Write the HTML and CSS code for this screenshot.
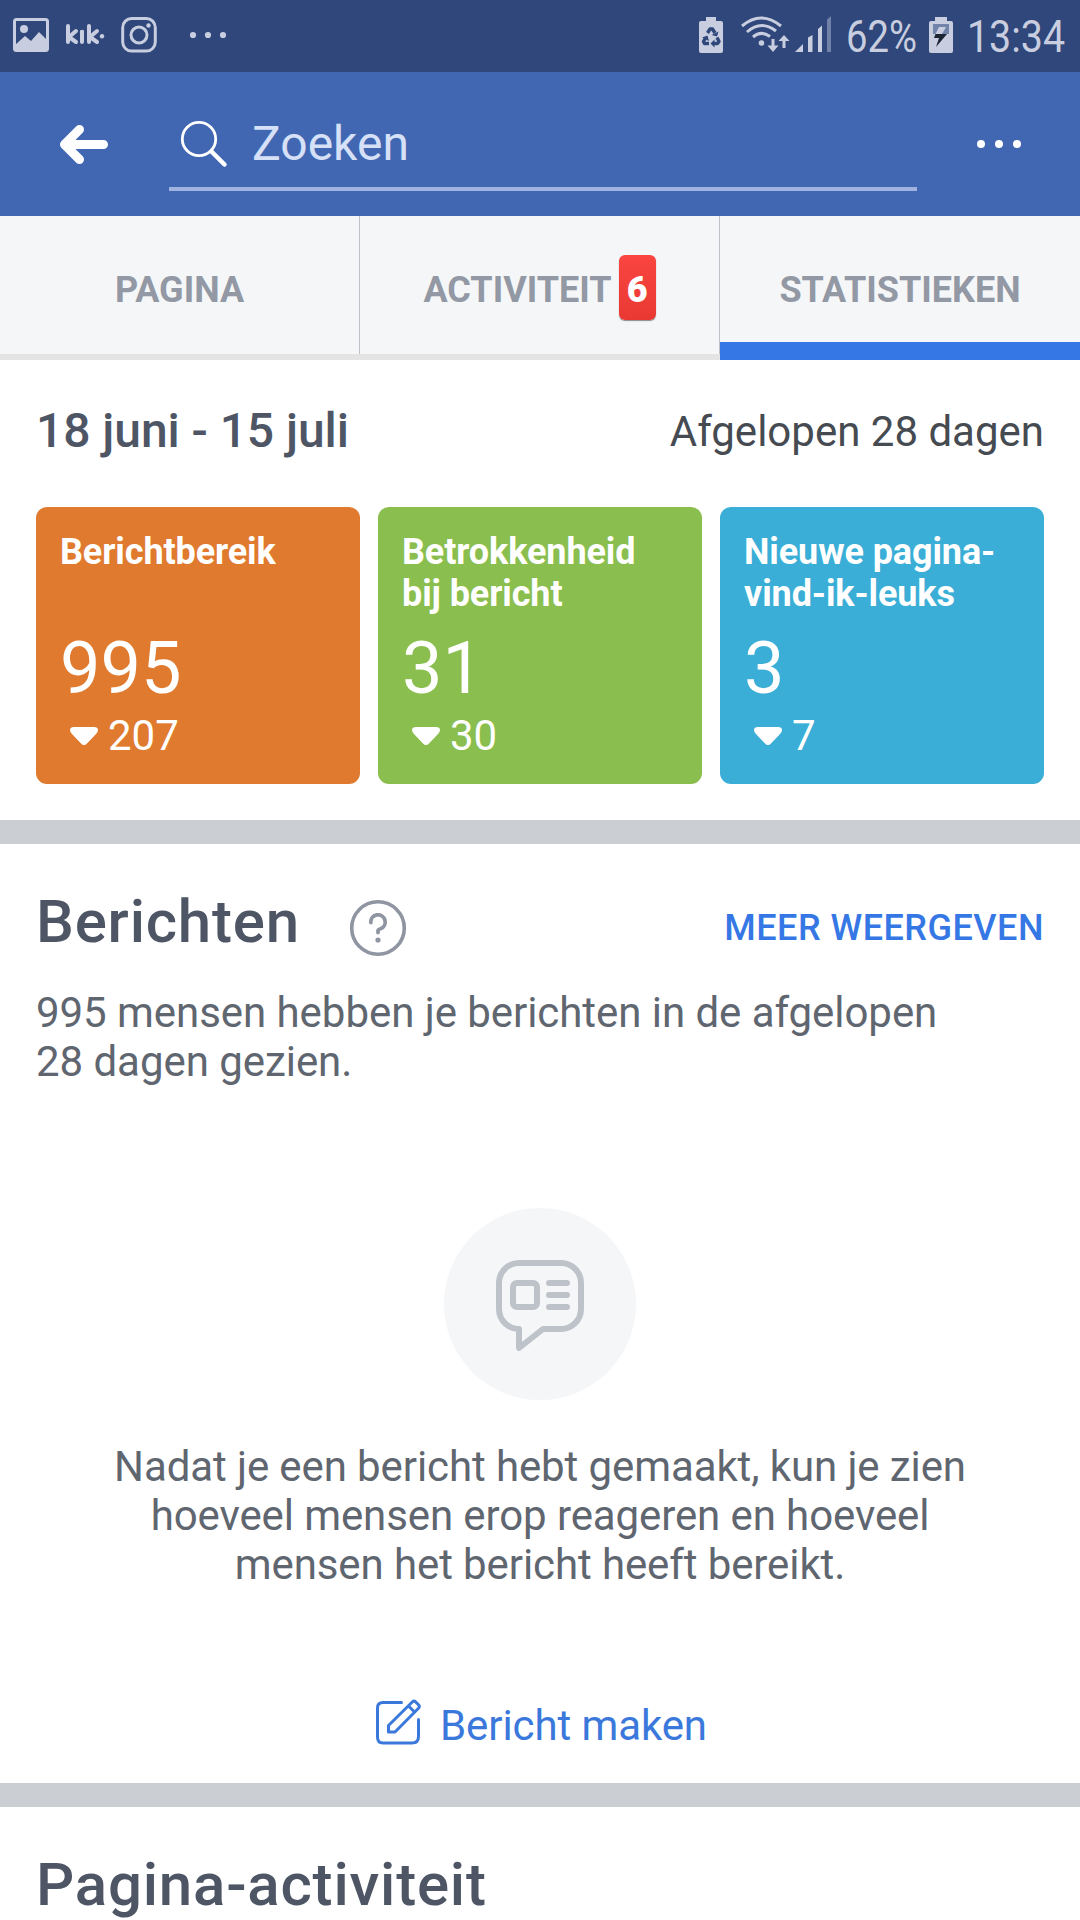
FILE: index.html
```html
<!DOCTYPE html>
<html lang="nl">
<head>
<meta charset="utf-8">
<title>Statistieken</title>
<link rel="stylesheet" href="styles.css">
</head>
<body>
<div class="status">
  <svg class="status-icons" width="240" height="72" viewBox="0 0 240 72" aria-hidden="true">
    <rect x="14.5" y="19.5" width="33" height="31" rx="2" fill="none" stroke="#c8cedf" stroke-width="3"/>
    <circle cx="24" cy="29" r="4" fill="#c8cedf"/>
    <path d="M15 45L25 36L31 41L39 32L47 40V50H15Z" fill="#c8cedf"/>
    <g fill="none" stroke="#c8cedf" stroke-width="4" stroke-linecap="round" stroke-linejoin="round">
      <path d="M68 26V42M76 31L69 37L76 42M82 32V42M89 26V42M97 31L90 37L97 42"/>
    </g>
    <circle cx="82" cy="32" r="2.2" fill="#c8cedf"/>
    <circle cx="102" cy="36.300" r="2.200" fill="#c8cedf"/>
    <rect x="122.700" y="18.500" width="32.600" height="32.600" rx="9" fill="none" stroke="#c8cedf" stroke-width="3"/>
    <circle cx="139" cy="35" r="8" fill="none" stroke="#c8cedf" stroke-width="3"/>
    <circle cx="148.500" cy="25.500" r="2.200" fill="#c8cedf"/>
    <g fill="#c8cedf"><circle cx="193" cy="35" r="3.100"/><circle cx="208" cy="35" r="3.100"/><circle cx="223" cy="35" r="3.100"/></g>
  </svg>
  <div class="status-right">
    <svg width="140" height="72" viewBox="695 0 140 72" aria-hidden="true">
      <path d="M706 17h10v4h5a2 2 0 0 1 2 2v28a2 2 0 0 1-2 2h-20a2 2 0 0 1-2-2V23a2 2 0 0 1 2-2h5z" fill="#c8cedf"/>
      <path d="M707.500 33L710 29H712.500L715 33M717 37.500L719 41.500L717.500 43.500H714M709 43.500H704.500L703.500 41.500L705.500 38" fill="none" stroke="#2f477a" stroke-width="3.400" stroke-linejoin="round"/>
      <path d="M714.500 39.500V47.500L710.500 43.500ZM718.500 31.500L717 36.500L711.500 35ZM702 37.500L707.500 35.500L709 41Z" fill="#2f477a"/>
      <g fill="none" stroke="#c8cedf" stroke-width="3">
        <path d="M742 26Q761 10 781 26M747 32Q761 19.500 776 31M753 37Q761 30 770 36.500"/>
        <path d="M773 39V49M784 37V48"/>
      </g>
      <circle cx="761.500" cy="43" r="2.800" fill="#c8cedf"/>
      <path d="M767.500 45.500L773 52L778.500 45.500ZM778.500 41L784 35L789.500 41Z" fill="#c8cedf"/>
      <path d="M795 52L803 44V52ZM808 37.500L812.500 35V52H808ZM818 29L822 25.500V52H818Z" fill="#c8cedf"/>
      <path d="M827 19.500L831 16V52H827Z" fill="#7281a8"/>
    </svg>
    <svg width="75" height="72" viewBox="0 0 75 72"><text class="status-text" x="2" y="52" textLength="71" lengthAdjust="spacingAndGlyphs">62%</text></svg>
    <svg width="28" height="72" viewBox="927 0 28 72" aria-hidden="true">
      <path d="M935 17h12v4h4a2 2 0 0 1 2 2v28a2 2 0 0 1-2 2h-20a2 2 0 0 1-2-2V23a2 2 0 0 1 2-2h4z" fill="#c8cedf"/>
      <path d="M933 24h16v10h-16z" fill="#7384aa"/>
      <path d="M939 27H946L942 34H935.500Z" fill="#c8cedf"/>
      <path d="M935.500 34H947L936 47L939 38H934Z" fill="#1c2534"/>
    </svg>
    <svg class="clock" width="102" height="72" viewBox="0 0 102 72"><text class="status-text" x="4" y="52" textLength="98" lengthAdjust="spacingAndGlyphs">13:34</text></svg>
  </div>
</div>

<header class="topbar">
  <svg class="back" width="50" height="42" viewBox="0 0 50 42" fill="none" stroke="#fff" stroke-width="9" stroke-linecap="round" stroke-linejoin="round"><path d="M20.500 6.500L5.500 21.500L20.500 36.500M8 21.500H44.500" /></svg>
  <div class="search">
    <svg width="48" height="48" viewBox="0 0 48 48" fill="none" stroke="#fff" stroke-linecap="round"><circle cx="18" cy="19" r="16.700" stroke-width="2.800"/><path d="M30.500 31.500L43.500 44.500" stroke-width="4.500"/></svg>
    <span>Zoeken</span>
  </div>
  <div class="dots"><i></i><i></i><i></i></div>
</header>

<nav class="tabs">
  <div class="tab"><span>PAGINA</span></div>
  <div class="tab"><span>ACTIVITEIT</span><b class="badge">6</b></div>
  <div class="tab active"><span>STATISTIEKEN</span></div>
</nav>

<section class="overview">
  <div class="period"><h3>18 juni - 15 juli</h3><span>Afgelopen 28 dagen</span></div>
  <div class="cards">
    <article class="card orange"><h4>Berichtbereik</h4><div class="value">995</div><div class="change"><svg width="28" height="18" viewBox="0 0 28 18"><path d="M4 0H24Q28 0 28 3Q28 5 26 7L17 16.500Q14 19.500 11 16.500L2 7Q0 5 0 3Q0 0 4 0Z" fill="#fff"/></svg>207</div></article>
    <article class="card green"><h4>Betrokkenheid<br>bij bericht</h4><div class="value">31</div><div class="change"><svg width="28" height="18" viewBox="0 0 28 18"><path d="M4 0H24Q28 0 28 3Q28 5 26 7L17 16.500Q14 19.500 11 16.500L2 7Q0 5 0 3Q0 0 4 0Z" fill="#fff"/></svg>30</div></article>
    <article class="card blue"><h4>Nieuwe pagina-<br>vind-ik-leuks</h4><div class="value">3</div><div class="change"><svg width="28" height="18" viewBox="0 0 28 18"><path d="M4 0H24Q28 0 28 3Q28 5 26 7L17 16.500Q14 19.500 11 16.500L2 7Q0 5 0 3Q0 0 4 0Z" fill="#fff"/></svg>7</div></article>
  </div>
</section>

<section class="posts">
  <div class="posts-head">
    <h2>Berichten</h2>
    <svg class="help" width="58" height="58" viewBox="0 0 58 58" fill="none" stroke="#8f95a1" stroke-linecap="round" stroke-linejoin="round"><circle cx="29" cy="29" r="26.300" stroke-width="3.600"/><path d="M21.800 23.500A7.200 7.200 0 1 1 31.500 29.800Q29 30.600 29 32V33.500" stroke-width="3.800"/><circle cx="29" cy="41" r="2.600" fill="#8f95a1" stroke="none"/></svg>
    <a class="more">MEER WEERGEVEN</a>
  </div>
  <p class="summary">995 mensen hebben je berichten in de afgelopen<br>28 dagen gezien.</p>
  <div class="empty">
    <div class="bubble"><svg width="192" height="192" viewBox="0 0 192 192" fill="none" stroke="#bec3ca" stroke-width="6" stroke-linecap="round" stroke-linejoin="round"><path d="M75 121C64 121 55 112 55 101V75C55 64 64 55 75 55H117C128 55 137 64 137 75V101C137 112 128 121 117 121H99L75 140V121Z"/><rect x="69" y="75" width="24" height="24" rx="4"/><path d="M105 75H123M105 87H123M105 99H123"/></svg></div>
    <p>Nadat je een bericht hebt gemaakt, kun je zien<br>hoeveel mensen erop reageren en hoeveel<br>mensen het bericht heeft bereikt.</p>
  </div>
  <a class="create"><svg width="48" height="48" viewBox="0 0 48 48" fill="none" stroke="#3b78dc" stroke-width="3" stroke-linecap="round" stroke-linejoin="round"><path d="M26.500 3.500H8Q2.500 3.500 2.500 9V38Q2.500 44 8 44H37Q43.500 44 43.500 37.500V20.500"/><path d="M13.500 33V26.500L37.500 2.800Q39 1.300 40.500 2.800L43.500 5.800Q45.300 7.500 43.500 9.200L20 33Z M33.500 7L39.500 13"/></svg><span>Bericht maken</span></a>
</section>

<section class="activity"><h2>Pagina-activiteit</h2></section>
</body>
</html>
```
FILE: styles.css
```css
* { box-sizing: border-box; }
body, h2, h3, h4, p { margin: 0; }
body {
  width: 1080px;
  height: 1920px;
  overflow: hidden;
  background: #fff;
  font-family: Roboto, "Liberation Sans", sans-serif;
  font-size: 42px;
}
svg { display: block; flex: none; overflow: visible; }

.status {
  display: flex;
  justify-content: space-between;
  height: 72px;
  background: #2f477a;
}
.status-right { display: flex; width: 385px; gap: 9px; }
.status-right svg + svg + svg { margin-left: -1px; }
.status-text { font-size: 45px; fill: #c8cedf; }

.topbar {
  display: flex;
  align-items: flex-start;
  height: 144px;
  background: #4267b2;
}
.back { margin: 51px 0 0 59px; }
.search {
  display: flex;
  gap: 23px;
  width: 748px;
  height: 119px;
  margin-left: 60px;
  padding: 48px 0 0 12px;
  border-bottom: 4px solid #9fb2e0;
  color: #d6e0f7;
  font-size: 48px;
  line-height: 48px;
}
.dots { display: flex; gap: 10px; margin: 68px 0 0 60px; }
.dots i { width: 8px; height: 8px; border-radius: 50%; background: #fff; }

.tabs { display: flex; height: 144px; background: #f5f6f8; }
.tab {
  display: flex;
  align-items: center;
  justify-content: center;
  width: 360px;
  padding: 10px 1px 0 0;
  border-bottom: 6px solid #e4e4e4;
  background: linear-gradient(#bec1c9, #bec1c9) right / 1px 100% no-repeat;
  background-clip: padding-box;
  color: #9298a4;
  font-size: 36px;
  font-weight: 700;
  line-height: 42px;
}
.tab.active { padding: 22px 0 0; border-bottom: 18px solid #3578e5; background: none; }
.badge {
  width: 37px;
  height: 65px;
  margin: 0 0 5px 7px;
  border-radius: 6px;
  background: linear-gradient(#fa4540, #e93832);
  box-shadow: 0 1px 1px #555a;
  color: #fff;
  line-height: 70px;
  text-align: center;
}

.overview { height: 484px; padding: 0 36px; border-bottom: 24px solid #cbced3; }
.period {
  display: flex;
  justify-content: space-between;
  height: 147px;
  color: #464b52;
}
.period h3 { color: #4e5665; font-size: 48px; font-weight: 500; letter-spacing: -0.07px; line-height: 142px; }
.period span { line-height: 144px; }
.cards { display: grid; grid-template-columns: repeat(3, 1fr); gap: 18px; }
.card { height: 277px; padding: 24px 24px 0; border-radius: 11px; color: #fff; }
.orange { background: #df7a2e; }
.green { background: #8abe4e; }
.blue { background: #3aaed6; }
.card h4 { height: 94px; font-size: 36px; font-weight: 700; letter-spacing: -0.1px; line-height: 42px; white-space: nowrap; }
.value { font-size: 72px; line-height: 88px; }
.change { display: flex; align-items: center; gap: 10px; padding-left: 10px; line-height: 46px; }

.posts { height: 963px; padding-top: 56px; border-bottom: 24px solid #cbced3; color: #606670; }
.posts-head { display: flex; height: 72px; padding: 0 36px; }
h2 { color: #4e5665; font-size: 60px; font-weight: 500; letter-spacing: 0.8px; line-height: 44px; }
.help { margin: -1px 0 0 49px; }
.more { margin-left: auto; color: #3578e5; font-size: 36px; font-weight: 500; letter-spacing: 0.5px; line-height: 57px; }
.summary { padding: 16px 36px 0; letter-spacing: -0.05px; line-height: 49px; }
.empty { display: flex; flex-direction: column; align-items: center; gap: 42px; padding-top: 122px; letter-spacing: -0.1px; text-align: center; line-height: 49px; }
.bubble { border-radius: 50%; background: #f5f6f8; }
.create { display: flex; justify-content: center; gap: 17px; padding: 110px 0 0 2px; color: #3b78dc; letter-spacing: -0.1px; line-height: 54px; }
.activity { padding: 56px 36px 0; }
```
